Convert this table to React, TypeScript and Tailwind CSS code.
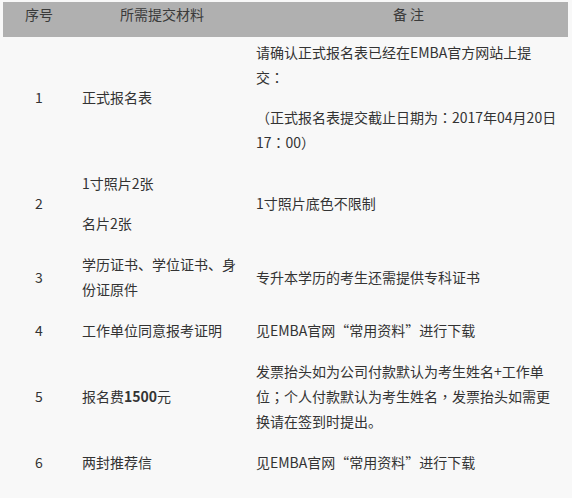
import React from 'react';

type Row = {
  no: string;
  items: React.ReactNode[][];
  notes: React.ReactNode[][];
};

// full-width colon / semicolon / comma sit in the middle of the cell in the original
function P({ t }: { t: string }) {
  return (
    <>
      {t.split(/([：；，])/).map((s, i) =>
        /^[：；，]$/.test(s) ? (
          <span key={i} style={{ fontFamily: '"Noto Sans CJK TC", sans-serif' }}>
            {s}
          </span>
        ) : (
          s
        )
      )}
    </>
  );
}

const rows: Row[] = [
  {
    no: '1',
    items: [['正式报名表']],
    notes: [
      ['请确认正式报名表已经在EMBA官方网站上提', <P t="交：" />],
      [<P t="（正式报名表提交截止日期为：2017年04月20日" />, <P t="17：00）" />],
    ],
  },
  {
    no: '2',
    items: [['1寸照片2张'], ['名片2张']],
    notes: [['1寸照片底色不限制']],
  },
  {
    no: '3',
    items: [['学历证书、学位证书、身', '份证原件']],
    notes: [['专升本学历的考生还需提供专科证书']],
  },
  {
    no: '4',
    items: [['工作单位同意报考证明']],
    notes: [['见EMBA官网“常用资料”进行下载']],
  },
  {
    no: '5',
    items: [[<>报名费<b className="font-bold">1500</b>元</>]],
    notes: [
      [
        '发票抬头如为公司付款默认为考生姓名+工作单',
        <P t="位；个人付款默认为考生姓名，发票抬头如需更" />,
        '换请在签到时提出。',
      ],
    ],
  },
  {
    no: '6',
    items: [['两封推荐信']],
    notes: [['见EMBA官网“常用资料”进行下载']],
  },
];

function Paras({ paras }: { paras: React.ReactNode[][] }) {
  return (
    <div className="flex flex-col gap-[15px]">
      {paras.map((lines, i) => (
        <p key={i} className="whitespace-nowrap">
          {lines.map((line, j) => (
            <span key={j} className="block">
              {line}
            </span>
          ))}
        </p>
      ))}
    </div>
  );
}

export default function App() {
  return (
    <div
      className="min-h-[498px] w-full bg-[#f8f8f8] pt-[2px] pl-[3px] text-[14px] leading-[25px] text-[#333]"
      style={{ fontFamily: '"Noto Sans CJK SC", "Noto Sans", sans-serif' }}
    >
      <div className="w-[565px]">
        {/* header */}
        <div className="grid h-[35px] grid-cols-[72px_174px_319px] bg-[#b0b0b0] text-[#3a3a3a]">
          <div className="text-center">序号</div>
          <div className="text-center">所需提交材料</div>
          <div className="text-center">备 注</div>
        </div>

        {/* body rows */}
        {rows.map((row) => (
          <div
            key={row.no}
            className="grid grid-cols-[72px_174px_319px] items-center pt-[3px] pb-[13px]"
          >
            <div className="text-center">{row.no}</div>
            <div className="pl-[7px]">
              <Paras paras={row.items} />
            </div>
            <div className="pl-[7px]">
              <Paras paras={row.notes} />
            </div>
          </div>
        ))}
      </div>
    </div>
  );
}
